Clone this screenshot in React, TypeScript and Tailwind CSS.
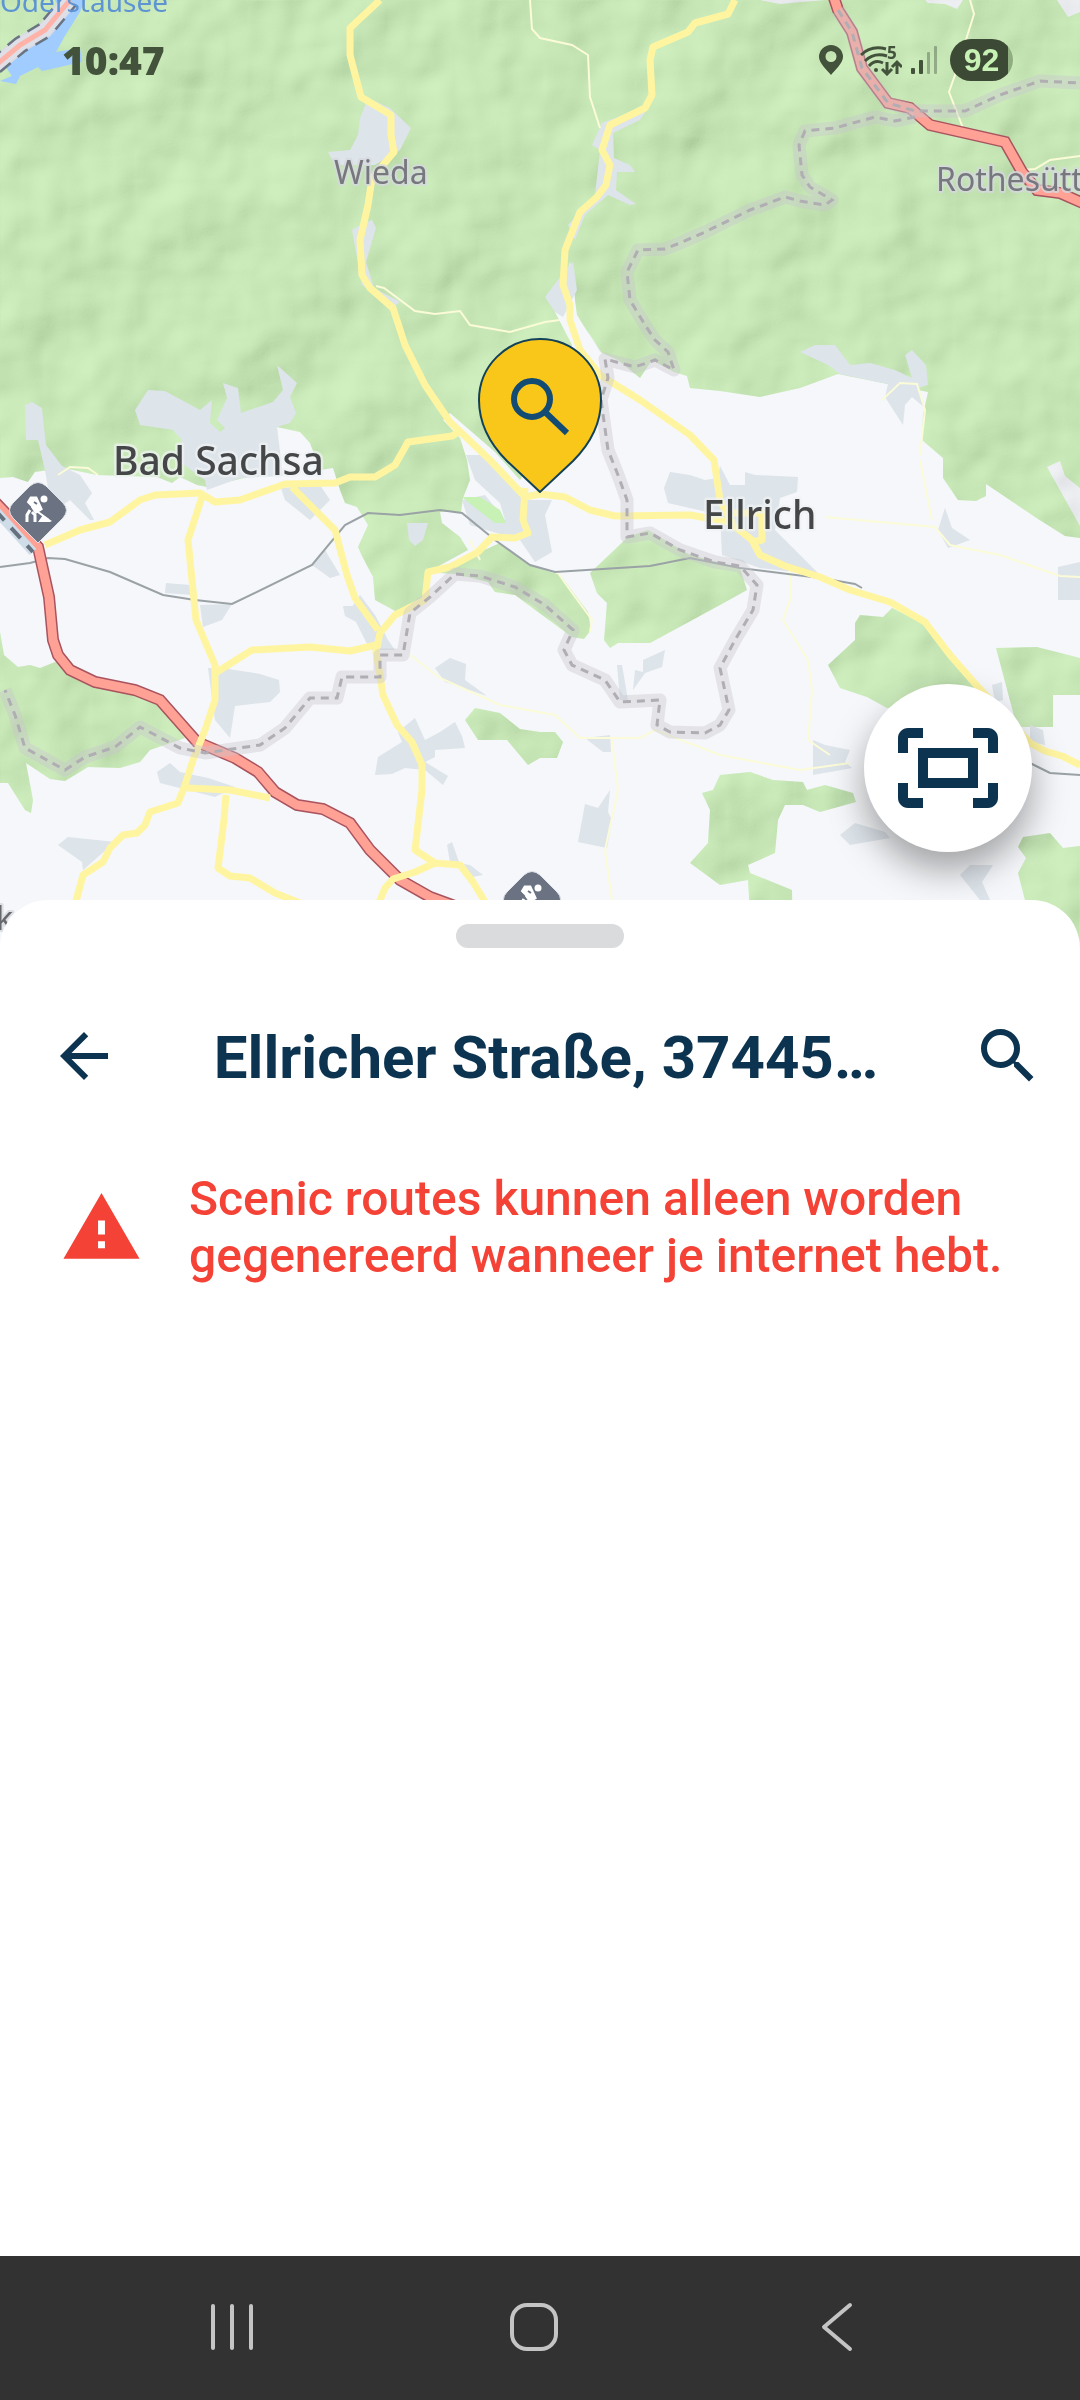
import { ReactNode } from "react"
import { MdArrowBack, MdOutlineFitScreen, MdSearch, MdWarning } from "react-icons/md"

const FOREST = [
  "M0 0H1080V538L1065 536L1038 519L986 484V496L976 501L958 500L943 478V458L922 440L923 415L928 392L838 374L800 388L760 397L720 391L690 388L687 376L674 372L652 360L640 378L618 360L600 352L577 315L570 262L570 300L555 312L572 345L560 420L520 480L495 452L450 413L443 420L460 438L467 460L470 480L463 498L461 512L440 512L442 523L460 537L468 550L437 567L426 576L428 598L397 612L375 600L373 577L362 556L358 547L368 525L357 507L345 503L340 490L333 468L320 470L310 443L300 432L277 427V470L207 487L197 485L180 477L172 483L157 477L97 475L63 468L35 472L28 482L13 477L0 478Z",
  "M0 632L4 655L18 667L30 665L40 668L55 662L75 672L100 685L140 692L160 703L185 738L150 750L140 762L120 768L88 767L65 781L50 779L26 763L33 800L31 813L25 810L8 783L0 783Z",
  "M440 573L480 552L500 543L530 565L560 575L588 612L591 630L584 639L572 637L515 595L495 592L488 582L455 574Z",
  "M590 573L628 537L648 530L690 555L740 568L747 590L720 605L650 643L618 643L610 648L604 640L607 603L597 593Z",
  "M465 720L475 708L500 713L520 729L540 732L555 732L563 742L557 758L540 758L528 765L507 740L478 740Z",
  "M855 623L860 615L883 617L892 608L923 623L950 650L990 700L887 708L867 697L840 688L828 665L855 640Z",
  "M996 648L1037 647L1080 658V695L1053 695L1053 727L1017 727Z",
  "M720 775L713 790L702 793L710 810L708 843L690 863L720 885L748 880L752 948H793L792 890L750 873L748 865L775 853L778 820L785 805L803 805L820 812L856 802L853 793L825 785L807 790L803 782L773 780L750 772Z",
  "M1018 847L1023 837L1050 833L1063 848L1080 846V948H1030L1025 900L1018 873L1026 858Z",
]

const TOWNS = [
  "M148 390L135 410L140 425L173 430L182 440L180 462L205 480L207 490L240 478L283 476L277 427L290 423L296 413L290 397L297 383L277 365L283 390L273 402L241 413L238 388L223 383L227 398L217 420L225 428L220 432L210 423L212 400L200 410L165 391Z",
  "M25 405L32 402L42 408L46 445L62 466L80 475L92 493L85 503L94 520L90 520L70 500L52 512L45 470L38 440L26 440Z",
  "M328 152L350 150L358 135L360 118L368 98L390 108L411 128L400 150L375 165L335 165Z",
  "M545 297L560 277L573 262L577 290L563 317L555 312Z",
  "M600 150L592 145L602 123L650 105L640 120L613 133L614 158L630 165L635 172L617 172L616 190L636 204L630 205L608 195L585 215L575 240L568 225L595 195Z",
  "M352 230L360 225L372 220L376 228L366 262L374 288L400 302L392 308L362 285Z",
  "M800 352L815 345L835 345L850 365L870 363L895 370L912 378L905 355L912 350L926 365L928 385L918 388L925 408L912 397L905 405L903 425L885 397L888 384L840 374L828 365Z",
  "M466 455L480 455L530 500L552 500L545 515L552 552L535 562L520 540L470 525L462 500L485 495L505 520L500 503L475 480Z",
  "M670 472L690 475L705 480L718 478L720 466L730 485L745 485V472L755 475L798 477L797 492L780 498L775 530L805 560L820 575L760 568L722 555L720 515L668 503L664 488Z",
  "M281 488L320 485L330 500L310 520L285 500Z",
  "M312 565L325 550L340 575L330 578Z",
  "M166 583L190 585L192 595L165 593Z",
  "M200 605L232 604L222 620L203 627Z",
  "M208 668L222 668L260 674L279 680L280 692L270 702L235 706L230 738L215 720Z",
  "M157 772L170 763L180 772L208 778L235 787L215 797L160 783Z",
  "M58 845L68 837L115 842L83 870L82 862Z",
  "M360 595L375 615L388 640L395 650L370 650L350 610Z",
  "M343 606L356 606L362 625L345 616Z",
  "M407 523H428L423 540L415 546L409 540Z",
  "M435 668L450 658L466 664L465 680L487 696L445 682Z",
  "M375 775L378 757L402 742L398 732L415 718L425 740L440 732L455 722L462 736L465 748L435 750V757L425 762L448 776L443 785L425 770L405 768L392 774Z",
  "M585 738L610 735L611 752L603 752Z",
  "M585 804L598 808L610 790L608 812L612 820L607 848L578 842Z",
  "M617 665L622 665L628 700L620 700Z",
  "M635 670L643 672L643 660L665 650L662 667L645 673L633 690Z",
  "M447 845L452 842L460 865L472 877L483 875L470 865L450 862Z",
  "M938 530L945 508L952 528L970 540L948 548Z",
  "M1058 567L1080 562V600L1058 600Z",
  "M813 740L825 745L850 750L845 762L852 768L813 775Z",
  "M840 835L855 823L885 832L890 838L850 845Z",
  "M960 875L970 865L993 865L982 882L990 900L980 900Z",
  "M992 685L1002 682L1003 700L995 702Z",
  "M1030 725L1043 730L1045 745L1030 742Z",
]

const YELLOW_ROADS = [
  "M380 0L350 28V55L361 97L391 115V135L394 152L372 178L368 205L360 240L362 275L370 288L393 308L405 345L425 385L450 422L490 460L525 497",
  "M735 0L728 14L695 23L688 32L653 47L650 60L652 95L645 108L610 125L602 150L610 165L606 185L597 197L580 212L565 250L563 285L570 305V320L580 350L600 375L640 400L690 435L714 460L720 500L733 525L752 540L760 555L785 566L820 577L850 590L890 602L925 622L950 655L978 687L1030 743L1045 751L1062 756L1080 765",
  "M733 513H762V540L752 542",
  "M525 497L540 494L565 497L590 510L615 516L690 515L735 523",
  "M525 488L523 520L528 533L515 538L492 537L478 552L450 567L428 572L425 600L395 615L380 633L376 652L380 675L383 695L397 725L412 742L422 765V790L415 850L435 863L460 865L473 882L487 905",
  "M435 863L415 872L393 879L385 888L378 905",
  "M45 545L80 530L110 522L140 500L155 495L200 493L215 502L240 500L285 484L335 483L350 477H375L395 465L408 442L452 436L462 430",
  "M202 497L188 540L193 590L196 620L215 665V700L205 730L193 760L185 785L178 803L150 812L145 825L137 833L123 835L110 848L103 862L83 875L75 905",
  "M217 672L252 650L310 647L350 651L376 645",
  "M292 487L335 530L347 575L355 598L378 630",
  "M187 788L230 790L270 798",
  "M226 795L224 820L218 868L230 876L250 878L275 893L300 903",
]

const MINOR_ROADS = [
  "M530 0L532 29L540 38L572 45L588 55L590 97L600 128",
  "M376 286L384 288L415 311L435 314L460 311L470 325L510 332L545 322L560 320",
  "M970 0L974 14L955 75L949 92L963 128",
  "M1022 170L1035 169L1050 160L1080 156",
  "M882 400L900 383L917 384L925 410L920 455",
  "M825 517L935 527L950 545L1000 555L1060 576L1080 577",
  "M790 570V600L783 620L808 660L812 690L808 740L830 755",
  "M410 655L440 678L500 705L555 715L580 738L640 738L655 730L720 755L800 770L850 763",
  "M612 740L618 790L605 850L612 900",
  "M470 540L480 560",
  "M558 573L570 590L592 620L590 632",
  "M920 460L932 520",
  "M58 475L70 467L88 468L98 475",
]

const PRIMARY_ROADS = [
  "M-5 502L38 547L49 597L53 640L58 655L70 670L95 682L135 690L160 700L197 742L235 758L258 772L275 792L297 805L323 809L350 823L370 850L400 880L430 897L460 908",
  "M833 -5L838 10L852 32L862 68L888 103L910 108L930 125L1005 142L1022 172L1037 190L1060 193L1085 204",
]

const BORDERS = [
  "M838 10L852 32L862 68L888 103L915 111H965L1000 95L1040 81L1080 83",
  "M915 117L895 121L875 117L835 128L805 131L799 145L802 175L810 187L832 200L825 205L800 201L785 197L750 210L705 232L680 243L665 249L638 250L627 272L630 300L645 325L655 340L668 352L674 370L655 360L635 367L605 359L608 378L601 400L608 450L618 475L627 500V537L650 533L680 550L715 562L740 566L757 585L753 610L735 640L720 668L729 710L720 725L705 733L670 732L657 725L660 700L620 702L605 680L572 665L564 650L573 630L545 605L515 587L480 576L455 574L430 597L410 613L403 655H380V677H342L337 698H310L285 728L260 745L205 753L180 748L140 727L115 747L85 757L65 770L25 748L15 715L5 690",
]

const RAILWAYS = [
  "M0 567L30 563L48 558L65 559L110 572L163 595L195 600L232 604L312 565L345 525L368 513L400 515L440 510L462 513L495 540L530 565L555 572L650 566L690 558L740 568L820 578L838 581L855 584L862 588",
  "M1030 763L1050 773L1080 775",
]

function PathGroup({ paths, ...props }: { paths: string[] } & React.SVGProps<SVGGElement>) {
  return (
    <g {...props}>
      {paths.map((d) => (
        <path key={d} d={d} />
      ))}
    </g>
  )
}

function RoadworksMarker({ x, y }: { x: number; y: number }) {
  return (
    <g transform={`translate(${x} ${y})`}>
      <path
        d="M0 34L-25 9Q-32 1 -25 -6L-8 -23Q0 -30 8 -23L25 -6Q32 1 25 9Z"
        fill="#6b7383"
        stroke="#dfe3e8"
        strokeWidth="1"
      />
      <g fill="none" stroke="#fff" strokeWidth="3">
        <path d="M-10 -6L-7 -11H-2L3 0L-2 3L-6 -3" fill="#fff" />
        <path d="M-10 -7L0 3L11 11" strokeWidth="2" />
        <path d="M-8 1L-11 6V13M-6 3L-3 6V13" />
      </g>
      <circle cx="6" cy="-10" r="3.5" fill="#fff" />
      <path d="M0 13L5 6L9 9L14 12L12 13Z" fill="#fff" />
      <path d="M-4 -7L-1 -5" stroke="#6b7383" strokeWidth="2" />
    </g>
  )
}

function MapView() {
  return (
    <svg
      className="block h-full w-full font-['Noto_Sans','Open_Sans',sans-serif]"
      viewBox="0 0 1080 948"
      preserveAspectRatio="xMidYMid slice"
      role="img"
      aria-label="Kaart van Ellrich"
    >
      <defs>
        <clipPath id="forest">
          {FOREST.map((d) => (
            <path key={d} d={d} />
          ))}
        </clipPath>
        <filter id="relief" x="0" y="0" width="100%" height="100%">
          <feTurbulence type="fractalNoise" baseFrequency="0.011" numOctaves="3" seed="8" />
          <feDiffuseLighting surfaceScale="14" lightingColor="#fff">
            <feDistantLight azimuth="225" elevation="32" />
          </feDiffuseLighting>
        </filter>
      </defs>

      <rect width="1080" height="948" fill="#f5f7fa" />
      <PathGroup paths={FOREST} fill="#c8f1b5" />
      <g fill="#f5f7fa">
        <path d="M1057 0L1068 17L1080 12V0Z" />
        <path d="M925 0L928 3L945 4L957 9L963 0Z" />
        <path d="M760 0L780 4L825 0Z" />
        <path d="M1047 467L1060 461L1065 476L1080 488V526Z" />
        <path d="M570 262L576 288L572 312L590 335L605 358L580 350L555 312Z" />
      </g>
      <g clipPath="url(#forest)">
        <rect width="1080" height="948" filter="url(#relief)" className="opacity-20 mix-blend-soft-light" />
      </g>
      <PathGroup paths={TOWNS} fill="#dde4ea" />
      <path d="M462 497L480 497L500 510L506 523L495 523L478 510Z" fill="#c8f1b5" />

      {/* reservoir with the tunnel road on its shore */}
      <path
        d="M85 0L80 12L66 34L56 52L80 48L82 62L42 71L38 67L20 76L16 84L0 81L12 76L5 66L60 10L55 0Z"
        fill="#a0ccff"
      />
      <path d="M-5 66L20 45L45 30L70 0" fill="none" stroke="#d9dbe4" strokeWidth="16" />
      <path d="M-5 66L20 45L45 30L70 0" fill="none" stroke="#6a7482" strokeWidth="18" strokeDasharray="14 9" />
      <path d="M-5 66L20 45L45 30L70 0" fill="none" stroke="#dfdfe8" strokeWidth="13" />
      <path d="M-5 66L20 45L45 30L70 0" fill="none" stroke="#ffb3a8" strokeWidth="5" />

      <PathGroup paths={MINOR_ROADS} fill="none" stroke="#fbfbd8" strokeWidth="2" />
      <PathGroup paths={RAILWAYS} fill="none" stroke="#9ba2a6" strokeWidth="2" />
      <PathGroup paths={PRIMARY_ROADS} fill="none" stroke="#a9535f" strokeWidth="12" />
      <PathGroup paths={PRIMARY_ROADS} fill="none" stroke="#ffa195" strokeWidth="9" />
      <PathGroup paths={YELLOW_ROADS} fill="none" stroke="#fff5a1" strokeWidth="7" strokeLinejoin="round" />
      <PathGroup paths={BORDERS} fill="none" stroke="#c9c6cc" strokeOpacity="0.4" strokeWidth="13" strokeLinejoin="round" />
      <PathGroup paths={BORDERS} fill="none" stroke="#b0adb3" strokeWidth="3" strokeDasharray="8 6" />

      <path d="M-5 510L33 552" stroke="#cfdde8" strokeWidth="9" />
      <path d="M-5 510L33 552" stroke="#66717f" strokeWidth="4" strokeDasharray="14 10" />
      <RoadworksMarker x={38} y={509} />
      <RoadworksMarker x={532} y={898} />

      <g strokeLinejoin="round" strokeWidth="5" paintOrder="stroke" stroke="#f0f2f4" strokeOpacity="0.7">
        <text x="113" y="475" fontSize="39" fontWeight="500" fill="#444648">
          Bad Sachsa
        </text>
        <text x="703" y="529" fontSize="39" fontWeight="500" fill="#444648">
          Ellrich
        </text>
      </g>
      <g strokeLinejoin="round" strokeWidth="4" paintOrder="stroke" stroke="#d6d8de" strokeOpacity="0.8" fontSize="32">
        <text x="334" y="184" fill="#77787e">
          Wieda
        </text>
        <text x="936" y="191" fill="#77787e">
          Rothesütte
        </text>
        <text x="-4" y="930" fill="#66686c">
          k
        </text>
      </g>
      <text x="0" y="12" fontSize="28" fill="#5f94d2">
        Oderstausee
      </text>

      {/* selected place */}
      <path
        d="M540 492L507 461C490 444 479 424 479 400A61 61 0 0 1 601 400C601 424 590 444 573 461Z"
        fill="#f9c71a"
        stroke="#134158"
        strokeWidth="2"
      />
      <circle cx="532" cy="399" r="18" fill="none" stroke="#124c74" strokeWidth="6" />
      <path d="M545 412L567 433" stroke="#124c74" strokeWidth="6" />
    </svg>
  )
}

function StatusBar() {
  return (
    <header className="absolute inset-x-0 top-0 flex h-[120px] items-center justify-between pr-[67px] pl-[62px] text-[#43523b]">
      <time className="font-['Open_Sans','Noto_Sans',sans-serif] text-[39px] font-extrabold">10:47</time>
      <div className="flex items-center">
        <svg className="mr-4 h-[30px] w-[26px]" viewBox="0 0 26 30" fill="currentColor" aria-label="Locatie">
          <path fillRule="evenodd" d="M13 30C9 25 1 18 1 12a12 12 0 0 1 24 0c0 6-8 13-12 18ZM13 6a5.500 5.500 0 1 0 0 11 5.500 5.500 0 0 0 0-11Z" />
        </svg>
        <svg className="mr-2 h-[32px] w-[42px]" viewBox="0 0 42 32" fill="none" stroke="currentColor" strokeWidth="3" aria-label="Wifi">
          <path d="M1 11Q11 1 26 5M5 17Q14 8 27 12M9 22Q15 15 23 19M27 18V30M22 25L27 30L32 25M37 30V18M32 23L37 18L42 23" />
          <circle cx="16" cy="26" r="2" fill="currentColor" stroke="none" />
          <text x="27" y="15" fontSize="17" fill="currentColor" stroke="none" className="font-['Open_Sans',sans-serif] font-bold">
            5
          </text>
        </svg>
        <svg className="mr-3 h-[32px] w-[28px]" viewBox="0 0 28 32" fill="currentColor" aria-label="Signaal">
          <rect x="1" y="24" width="4" height="6" rx="1" />
          <rect x="9" y="16" width="4" height="14" rx="1" />
          <rect x="17" y="8" width="3" height="22" rx="1" opacity="0.4" />
          <rect x="24" y="2" width="3" height="28" rx="1" opacity="0.4" />
        </svg>
        <span className="flex h-[42px] w-[63px] items-center justify-center rounded-full bg-linear-to-r from-[#3c4934] from-92% to-[#8fad80] to-92% font-['Liberation_Sans',sans-serif] text-[32px] leading-none font-bold text-[#c8f1b5]">
          92
        </span>
      </div>
    </header>
  )
}

function IconButton({ label, className, children }: { label: string; className?: string; children: ReactNode }) {
  return (
    <button type="button" aria-label={label} className={className}>
      {children}
    </button>
  )
}

function NavigationBar() {
  return (
    <nav className="flex h-36 items-center justify-between bg-[#323232] pr-[222px] pl-[210px] text-[#c4c4c4]">
      <IconButton label="Recente apps">
        <svg className="h-14 w-11" viewBox="0 0 44 56" fill="none" stroke="currentColor" strokeWidth="4" strokeLinecap="round">
          <path d="M3 6V48M22 6V48M41 6V48" />
        </svg>
      </IconButton>
      <IconButton label="Startscherm">
        <svg className="h-14 w-14" viewBox="0 0 56 56" fill="none" stroke="currentColor" strokeWidth="4">
          <rect x="6" y="5" width="44" height="44" rx="15" />
        </svg>
      </IconButton>
      <IconButton label="Terug">
        <svg className="h-14 w-11" viewBox="0 0 44 56" fill="none" stroke="currentColor" strokeWidth="4" strokeLinecap="round" strokeLinejoin="round">
          <path d="M36 5L10 27L36 49" />
        </svg>
      </IconButton>
    </nav>
  )
}

export default function App() {
  return (
    <div className="flex min-h-screen flex-col bg-white font-['Roboto',sans-serif]">
      <section className="relative h-[948px] overflow-hidden">
        <MapView />
        <StatusBar />
        <IconButton
          label="Kaart passend maken"
          className="absolute right-12 bottom-24 flex size-[168px] items-center justify-center rounded-full bg-white text-[#0c3350] shadow-[0_18px_36px_rgba(0,0,0,0.35)]"
        >
          <MdOutlineFitScreen size={120} />
        </IconButton>
      </section>

      <main className="relative -mt-12 flex-1 rounded-t-[48px] bg-white pt-6">
        <div className="mx-auto h-6 w-[168px] rounded-full bg-[#dadbdd]" />
        <div className="mt-9 flex h-[144px] items-center pr-9 pl-12 text-[#0c3350]">
          <IconButton label="Terug">
            <MdArrowBack size={72} />
          </IconButton>
          <h1 className="min-w-0 flex-1 truncate px-6 pt-1 text-center text-[60px] leading-[72px] font-bold">
            Ellricher Straße, 37445…
          </h1>
          <IconButton label="Zoeken">
            <MdSearch size={72} />
          </IconButton>
        </div>
        <div role="alert" className="mt-[42px] flex items-center gap-[46px] pr-12 pl-[60px] text-[#f44336]">
          <MdWarning size={83} className="shrink-0" />
          <p className="text-[48px] leading-[57px] font-medium">
            Scenic routes kunnen alleen worden gegenereerd wanneer je internet hebt.
          </p>
        </div>
      </main>

      <NavigationBar />
    </div>
  )
}
